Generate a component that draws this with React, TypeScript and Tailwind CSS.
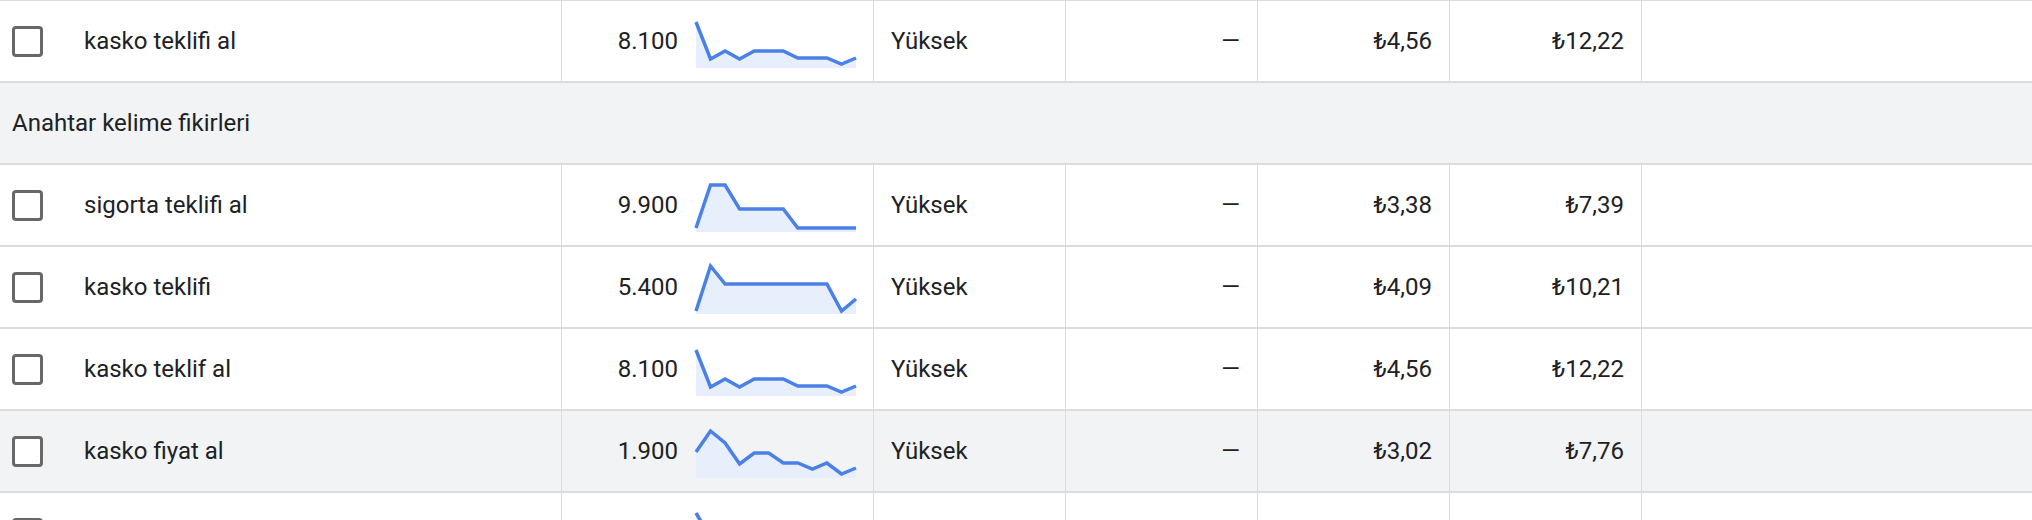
import React from 'react';

type Row =
  | { kind: 'group'; label: string }
  | {
      kind: 'keyword';
      keyword: string;
      volume: string;
      trend: number[];
      competition: string;
      share: string;
      low: string;
      high: string;
      hovered?: boolean;
    };

// trend values are the y position of each month inside the 80px cell
const rows: Row[] = [
  {
    kind: 'keyword',
    keyword: 'kasko teklifi al',
    volume: '8.100',
    trend: [21, 58, 50, 58, 50, 50, 50, 57, 57, 57, 63, 57],
    competition: 'Yüksek',
    share: '—',
    low: '₺4,56',
    high: '₺12,22',
  },
  { kind: 'group', label: 'Anahtar kelime fikirleri' },
  {
    kind: 'keyword',
    keyword: 'sigorta teklifi al',
    volume: '9.900',
    trend: [63, 20, 20, 44, 44, 44, 44, 63, 63, 63, 63, 63],
    competition: 'Yüksek',
    share: '—',
    low: '₺3,38',
    high: '₺7,39',
  },
  {
    kind: 'keyword',
    keyword: 'kasko teklifi',
    volume: '5.400',
    trend: [64, 19, 37, 37, 37, 37, 37, 37, 37, 37, 64, 52],
    competition: 'Yüksek',
    share: '—',
    low: '₺4,09',
    high: '₺10,21',
  },
  {
    kind: 'keyword',
    keyword: 'kasko teklif al',
    volume: '8.100',
    trend: [21, 58, 50, 58, 50, 50, 50, 57, 57, 57, 63, 57],
    competition: 'Yüksek',
    share: '—',
    low: '₺4,56',
    high: '₺12,22',
  },
  {
    kind: 'keyword',
    keyword: 'kasko fiyat al',
    volume: '1.900',
    trend: [41, 20, 32, 53, 42, 42, 52, 52, 58, 52, 63, 57],
    competition: 'Yüksek',
    share: '—',
    low: '₺3,02',
    high: '₺7,76',
    hovered: true,
  },
  // only the top edge of this row is in view, so its texts are not shown
  {
    kind: 'keyword',
    keyword: '',
    volume: '',
    trend: [20, 44, 50, 46, 52, 52, 56, 50, 58, 54, 63, 58],
    competition: '',
    share: '',
    low: '',
    high: '',
  },
];

const Sparkline = ({ values }: { values: number[] }) => {
  const w = 160;
  const top = 17;
  const h = 50;
  const step = w / (values.length - 1);
  const pts = values.map((v, i) => `${(i * step).toFixed(1)},${v - top}`);
  const line = pts.join(' ');
  const area = `0,${h} ${line} ${w},${h}`;
  return (
    <svg width={w} height={h} viewBox={`0 0 ${w} ${h}`} className="mt-[4px] shrink-0 overflow-visible">
      <polygon points={area} fill="#e8effc" />
      <polyline points={line} fill="none" stroke="#4b81e6" strokeWidth={3.5} strokeLinejoin="miter" />
    </svg>
  );
};

const Checkbox = () => (
  <div className="w-[31px] h-[31px] rounded-[4px] border-[3.5px] border-[#686868] bg-white shrink-0" />
);

const KeywordRow = ({ row }: { row: Extract<Row, { kind: 'keyword' }> }) => (
  <div
    className={`flex h-[82px] border-b-2 border-[#dadce0] ${row.hovered ? 'bg-[#f1f3f4]' : 'bg-white'}`}
  >
    <div className="flex w-[561px] shrink-0 items-center pl-[12px]">
      <Checkbox />
      <span className="ml-[41px]">{row.keyword}</span>
    </div>
    <div className="flex w-[312px] shrink-0 items-center justify-end gap-[18px] border-l border-[#dadce0] pr-[17px]">
      <span>{row.volume}</span>
      <Sparkline values={row.trend} />
    </div>
    <div className="flex w-[192px] shrink-0 items-center border-l border-[#dadce0] pl-[17px]">
      {row.competition}
    </div>
    <div className="flex w-[192px] shrink-0 items-center justify-end border-l border-[#dadce0] pr-[17px]">
      {row.share}
    </div>
    <div className="flex w-[192px] shrink-0 items-center justify-end border-l border-[#dadce0] pr-[17px]">
      {row.low}
    </div>
    <div className="flex w-[192px] shrink-0 items-center justify-end border-l border-[#dadce0] pr-[17px]">
      {row.high}
    </div>
    <div className="flex-1 border-l border-[#dadce0]" />
  </div>
);

export default function App() {
  return (
    <div
      className="w-[2032px] h-[520px] overflow-hidden bg-white text-[24px] text-[#202124]"
      style={{ fontFamily: 'Roboto, "Liberation Sans", sans-serif' }}
    >
      <div className="h-px bg-[#dadce0]" />
      {rows.map((row, i) =>
        row.kind === 'group' ? (
          <div
            key={i}
            className="flex h-[82px] items-center border-b-2 border-[#dadce0] bg-[#f1f3f4] pl-[12px]"
          >
            {row.label}
          </div>
        ) : (
          <KeywordRow key={i} row={row} />
        )
      )}
    </div>
  );
}
